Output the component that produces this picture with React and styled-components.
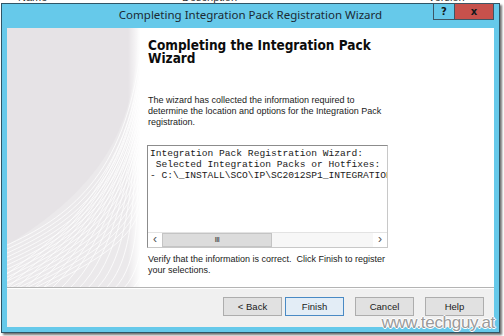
import React from 'react';
import styled, { createGlobalStyle } from 'styled-components';

const GlobalStyle = createGlobalStyle`
    html, body {
        margin: 0;
        padding: 0;
        background: #ffffff;
        overflow: hidden;
    }
`;

const UI_FONT = `"Liberation Sans", Arial, sans-serif`;

const outputLines = [
    'Integration Pack Registration Wizard:',
    ' Selected Integration Packs or Hotfixes:',
    '- C:\\_INSTALL\\SCO\\IP\\SC2012SP1_INTEGRATION_PACK_FOR_SYSTEM_CENTER.OIP',
];

const buttons = [
    { label: '< Back' },
    { label: 'Finish', isDefault: true },
    { label: 'Cancel', spaced: true },
    { label: 'Help', spaced: true },
];

function SideArt() {
    const sweeps = [];
    // curves that follow the edge of the grey disc
    for (let i = 0; i < 16; i++) {
        const y0 = 218 + i * 4;
        sweeps.push(
            <path key={'a' + i}
                d={`M-2 ${y0} C ${60 + i * 2} ${190 + i * 3}, ${118 + i} ${150 + i * 4}, ${134} ${20 + i * 10}`} />
        );
    }
    // lines rising from the bottom edge
    for (let i = 0; i < 18; i++) {
        const x0 = -20 + i * 9;
        sweeps.push(
            <path key={'b' + i}
                d={`M${x0} 262 C ${x0 + 40} 225, ${112 + i * 0.6} ${190 - i * 5}, 136 ${30 + i * 7}`} />
        );
    }
    return (
        <svg width="133" height="259" viewBox="0 0 133 259">
            <defs>
                <linearGradient id="edge" x1="0" x2="1" y1="0" y2="0">
                    <stop offset="0" stopColor="#ffffff" stopOpacity="0" />
                    <stop offset="1" stopColor="#ffffff" stopOpacity="0.95" />
                </linearGradient>
            </defs>
            <rect width="133" height="259" fill="#ebe9eb" />
            <path d="M0 0 L131 0 C 129 80, 112 150, 0 217 Z" fill="#e6e3e6" />
            <g fill="none" stroke="#ffffff" strokeWidth="0.8" strokeOpacity="0.95">
                {sweeps}
            </g>
            <rect x="121" width="12" height="259" fill="url(#edge)" />
        </svg>
    );
}

export default function App() {
    return (
        <Page>
            <GlobalStyle />
            <ListHeader>
                <Column $width={164}>Name</Column>
                <Column $width={246}>Description</Column>
                <Column>Version</Column>
            </ListHeader>
            <Window>
                <TitleBar>
                    <span />
                    <Title>Completing Integration Pack Registration Wizard</Title>
                    <Caption>
                        <CaptionButton>?</CaptionButton>
                        <CaptionButton $close>x</CaptionButton>
                    </Caption>
                </TitleBar>
                <Client>
                    <Main>
                        <SidePanel>
                            <SideArt />
                        </SidePanel>
                        <Body>
                            <Heading>Completing the Integration Pack Wizard</Heading>
                            <Paragraph>
                                The wizard has collected the information required to determine the location and options for the Integration Pack registration.
                            </Paragraph>
                            <OutputBox>
                                <OutputText>
                                    {outputLines.map(line => (
                                        <Line key={line}>{line}</Line>
                                    ))}
                                </OutputText>
                                <ScrollBar>
                                    <Arrow>&lsaquo;</Arrow>
                                    <Thumb>III</Thumb>
                                    <Track />
                                    <Arrow>&rsaquo;</Arrow>
                                </ScrollBar>
                            </OutputBox>
                            <Paragraph>
                                Verify that the information is correct.&nbsp; Click Finish to register your selections.
                            </Paragraph>
                        </Body>
                    </Main>
                    <Footer>
                        {buttons.map(b => (
                            <Button key={b.label} $default={b.isDefault} $spaced={b.spaced}>
                                {b.label}
                            </Button>
                        ))}
                    </Footer>
                </Client>
            </Window>
            <Watermark>www.techguy.at</Watermark>
        </Page>
    );
}

const Page = styled.div`
    position: relative;
    width: 504px;
    height: 336px;
    overflow: hidden;
    background: #ffffff;
    font-family: ${UI_FONT};
`;

const ListHeader = styled.div`
    display: flex;
    height: 3px;
    overflow: hidden;
    padding-left: 18px;
    font-size: 11px;
    color: #333;
    & > * {
        margin-top: -8px;
    }
`;

const Column = styled.div`
    width: ${p => (p.$width ? p.$width + 'px' : 'auto')};
    line-height: 11px;
`;

const Window = styled.div`
    margin-left: 1px;
    width: 497px;
    height: 328px;
    border: 1px solid #2f5566;
    background: #66c9ea;
    display: flex;
    flex-direction: column;
    box-shadow: 2px 2px 2px rgba(0, 0, 0, 0.55);
`;

const TitleBar = styled.div`
    height: 24px;
    display: grid;
    grid-template-columns: 1fr auto 1fr;
    align-items: start;
`;

const Title = styled.div`
    font-family: "Noto Sans", "Liberation Sans", sans-serif;
    font-size: 11.5px;
    line-height: 22px;
    color: #1b2a33;
`;

const Caption = styled.div`
    display: flex;
    justify-content: flex-end;
    margin-top: -1px;
    padding-right: 5px;
`;

const CaptionButton = styled.div`
    width: ${p => (p.$close ? '39px' : '22px')};
    height: 17px;
    box-sizing: border-box;
    border: 1px solid #3d5665;
    border-left-width: ${p => (p.$close ? '0' : '1px')};
    background: ${p => (p.$close ? '#c7514c' : '#66c9ea')};
    color: #10181c;
    font-family: "DejaVu Sans", sans-serif;
    font-weight: bold;
    font-size: 10px;
    line-height: 15px;
    text-align: center;
`;

const Client = styled.div`
    flex: 1;
    margin: 0 5px 5px;
    background: #f0f0f0;
    display: flex;
    flex-direction: column;
`;

const Main = styled.div`
    height: 259px;
    display: flex;
    background: #ffffff;
`;

const SidePanel = styled.div`
    width: 133px;
    flex-shrink: 0;
    svg {
        display: block;
    }
`;

const Body = styled.div`
    flex: 1;
    padding: 11px 0 0 8px;
    display: flex;
    flex-direction: column;
    align-items: flex-start;
`;

const Heading = styled.h1`
    margin: 0;
    width: 250px;
    font-family: "DejaVu Sans Condensed", "DejaVu Sans", sans-serif;
    font-weight: bold;
    font-size: 13.5px;
    line-height: 13px;
    color: #0c0c0c;
`;

const Paragraph = styled.p`
    margin: 30px 0 0;
    width: 240px;
    font-size: 9px;
    line-height: 11px;
    color: #1a1a1a;
`;

const OutputBox = styled.div`
    margin-top: 17px;
    margin-left: -1px;
    width: 241px;
    height: 103px;
    box-sizing: border-box;
    border: 1px solid #8c8c8c;
    border-right-color: #c8c8c8;
    border-bottom-color: #c8c8c8;
    background: #ffffff;
    display: flex;
    flex-direction: column;
    & + ${Paragraph} {
        margin-top: 6px;
    }
`;

const OutputText = styled.div`
    flex: 1;
    overflow: hidden;
    padding: 2px 0 0 2px;
    font-family: "Liberation Mono", "Courier New", monospace;
    font-size: 9.6px;
    line-height: 11px;
    color: #1a1a1a;
    white-space: pre;
`;

const Line = styled.div``;

const ScrollBar = styled.div`
    height: 14px;
    display: flex;
    border-top: 1px solid #e3e3e3;
`;

const Arrow = styled.div`
    width: 14px;
    background: #ffffff;
    color: #555;
    font-size: 12px;
    line-height: 12px;
    text-align: center;
`;

const Thumb = styled.div`
    width: 110px;
    box-sizing: border-box;
    border: 1px solid #c4c4c4;
    background: #dcdcdc;
    color: #606060;
    font-size: 7px;
    font-weight: bold;
    line-height: 12px;
    text-align: center;
    letter-spacing: -0.5px;
`;

const Track = styled.div`
    flex: 1;
    background: #f7f7f7;
`;

const Footer = styled.div`
    flex: 1;
    border-top: 1px solid #b4b4b4;
    box-shadow: inset 0 1px 0 #ffffff;
    display: flex;
    justify-content: flex-end;
    align-items: flex-start;
    padding: 9px 10px 0 0;
`;

const Button = styled.div`
    width: 59px;
    height: 19px;
    box-sizing: border-box;
    margin-left: ${p => (p.$spaced ? '11px' : '3px')};
    border: 1px solid ${p => (p.$default ? '#4a8ac4' : '#adadad')};
    background: ${p => (p.$default ? '#e3edf6' : '#e1e1e1')};
    font-size: 9.5px;
    line-height: 17px;
    text-align: center;
    color: #1a1a1a;
`;

const Watermark = styled.div`
    position: absolute;
    right: 9px;
    bottom: 5px;
    font-family: "Liberation Sans", Arial, sans-serif;
    font-size: 17px;
    line-height: 17px;
    letter-spacing: -0.3px;
    color: #9a9a9a;
    text-shadow: 0 0 1px #fff, 1px 0 0 #fff, -1px 0 0 #fff, 0 1px 0 #fff, 0 -1px 0 #fff;
`;
